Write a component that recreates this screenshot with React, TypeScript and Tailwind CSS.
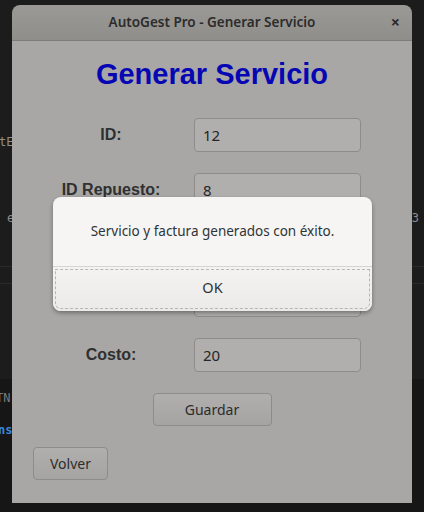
import React from "react";

const rows = [
  { label: "ID:", value: "12" },
  { label: "ID Repuesto:", value: "8" },
  { label: "", value: "" },
  { label: "", value: "" },
  { label: "Costo:", value: "20" },
];

export default function App() {
  return (
    <div className="relative h-[512px] w-[424px] overflow-hidden bg-[#1c1c1c] font-['Noto_Sans',sans-serif]">
      {/* desktop content behind the window */}
      <div className="flex h-full flex-col font-['DejaVu_Sans_Mono',monospace] text-[12px] leading-[16px]">
        <div className="h-[134px]" />
        <div className="flex h-[16px] text-[#8e8e8e]">
          <span className="-ml-[1px]">tE</span>
        </div>
        <div className="h-[60px]" />
        <div className="flex h-[16px] justify-between text-[#8e8e8e]">
          <span className="pl-[7px]">e</span>
          <span className="pr-[5px]">3</span>
        </div>
        <div className="h-[40px]" />
        <div className="h-[1px] bg-[#2a2a2a]" />
        <div className="h-[16px]" />
        <div className="h-[1px] bg-[#2a2a2a]" />
        <div className="h-[95px]" />
        <div className="flex flex-1 flex-col bg-[#161616]">
          <div className="h-[11px]" />
          <div className="flex h-[16px] text-[#7a7a7a]">
            <span className="-ml-[4px]">TN</span>
          </div>
          <div className="h-[16px]" />
          <div className="flex h-[16px] font-bold text-[#3a86da]">
            <span className="-ml-[2px]">ns</span>
          </div>
        </div>
      </div>

      {/* window */}
      <div className="absolute left-[12px] top-[5px] flex h-[498px] w-[400px] flex-col overflow-hidden rounded-t-[8px]">
        <div className="relative flex h-[36px] shrink-0 items-center justify-center border-b border-[#7f7d7a] bg-gradient-to-b from-[#9b9996] to-[#908e8b]">
          <span className="text-[13.5px] font-semibold text-[#2c2c2c]">AutoGest Pro - Generar Servicio</span>
          <span className="absolute right-[12px] top-[8px] text-[16px] font-bold leading-[18px] text-[#2c2c2c]">×</span>
        </div>
        <div className="flex flex-1 flex-col bg-[#a8a7a5]">
          <h1 className="pt-[16px] text-center font-['Liberation_Sans',sans-serif] text-[29px] font-bold leading-[34px] text-[#0606b4]">
            Generar Servicio
          </h1>
          <div className="mt-[27px] flex flex-col gap-[21px] pl-[16px]">
            {rows.map((r, i) => (
              <div key={i} className="grid grid-cols-[166px_167px] items-center">
                <span className="pb-[1px] text-center font-['Liberation_Sans',sans-serif] text-[16px] font-bold text-[#2f3031]">
                  {r.label}
                </span>
                <div className="flex h-[34px] items-center rounded-[4px] border border-[#8e8c89] bg-[#b0afad] pl-[8px] text-[15px] text-[#262626]">
                  {r.value}
                </div>
              </div>
            ))}
          </div>
          <div className="mt-[21px] flex justify-center">
            <button className="h-[33px] w-[119px] rounded-[4px] border border-[#8e8c89] bg-gradient-to-b from-[#b0afad] to-[#a5a4a2] text-[14px] text-[#2c2c2c]">
              Guardar
            </button>
          </div>
          <div className="mt-[21px] pl-[21px]">
            <button className="h-[33px] w-[75px] rounded-[4px] border border-[#8e8c89] bg-gradient-to-b from-[#b0afad] to-[#a5a4a2] text-[14px] text-[#2c2c2c]">
              Volver
            </button>
          </div>
        </div>
      </div>

      {/* message dialog */}
      <div className="absolute left-[53px] top-[197px] flex h-[114px] w-[319px] flex-col overflow-hidden rounded-[8px] bg-[#f6f5f4] shadow-[0_2px_4px_rgba(0,0,0,0.35)]">
        <div className="flex h-[69px] items-center justify-center text-[13.5px] text-[#2e3436]">
          Servicio y factura generados con éxito.
        </div>
        <div className="h-[1px] bg-[#d6d4d1]" />
        <div className="flex flex-1 bg-gradient-to-b from-[#f4f3f2] to-[#eceae8] p-[2px]">
          <div className="flex flex-1 items-center justify-center rounded-b-[6px] border border-dashed border-[#b8b6b3] pb-[2px] text-[14.5px] text-[#2e3436]">
            OK
          </div>
        </div>
      </div>
    </div>
  );
}
